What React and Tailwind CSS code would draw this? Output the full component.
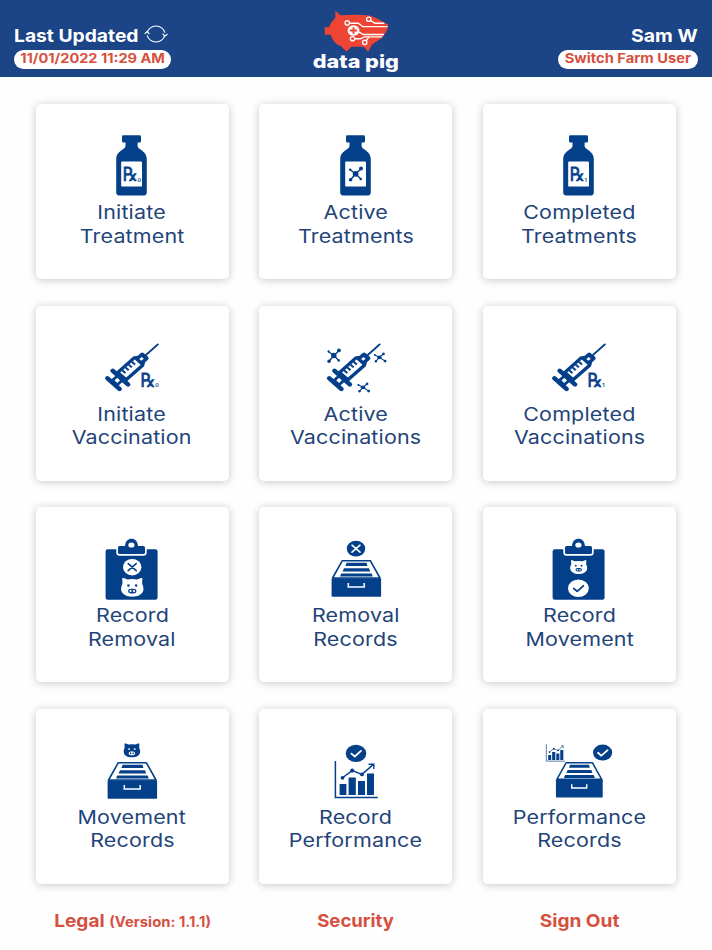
import React from 'react';

const BLUE = '#04408a';

// Small pig head, drawn in a 24x20 box
const PigHead = ({ x, y, width, height, color, detail }) => (
  <svg x={x} y={y} width={width} height={height} viewBox="0 0 24 20" preserveAspectRatio="none">
    <path
      fill={color}
      d="M1.5 .6C1.7 0 2.4 0 3 .2L7 1.8Q12 .8 17 1.8L21 .2C21.6 0 22.3 0 22.5 .6L22.3 6.5Q24 9 23.8 12C23.3 17 18 20 12 20S.7 17 .2 12Q0 9 1.7 6.5Z"
    />
    <circle cx="8" cy="8.2" r="1.3" fill={detail} />
    <circle cx="16" cy="8.2" r="1.3" fill={detail} />
    <rect x="7.6" y="11.4" width="8.8" height="5.2" rx="2.6" fill={detail} />
    <ellipse cx="10.2" cy="14" rx="1" ry="1.3" fill={color} />
    <ellipse cx="13.8" cy="14" rx="1" ry="1.3" fill={color} />
  </svg>
);

const CrossMark = ({ cx, cy, rx, ry, color, detail }) => (
  <g>
    <ellipse cx={cx} cy={cy} rx={rx} ry={ry} fill={color} />
    <path
      d={`M${cx - 4} ${cy - 3.5}l8 7m0 -7l-8 7`}
      stroke={detail}
      strokeWidth="1.6"
      strokeLinecap="round"
    />
  </g>
);

const CheckMark = ({ cx, cy, rx, ry, color, detail }) => (
  <g>
    <ellipse cx={cx} cy={cy} rx={rx} ry={ry} fill={color} />
    <path
      d={`M${cx - 4.6} ${cy + 0.2}l3.4 2.9l6.2 -5.6`}
      fill="none"
      stroke={detail}
      strokeWidth="1.8"
      strokeLinecap="round"
      strokeLinejoin="round"
    />
  </g>
);

const Rx = ({ x, y, digit }) => (
  <g transform={`translate(${x} ${y})`} fill={BLUE}>
    <text
      transform="translate(-1.2 14.6) scale(1 1.12)"
      fontSize="17.5"
      stroke={BLUE}
      strokeWidth=".6"
      textLength="15"
      lengthAdjust="spacingAndGlyphs"
      className="font-['DejaVu_Sans',sans-serif]"
    >
      ℞
    </text>
    <text x="13.9" y="14.8" fontSize="5.4" fontWeight="600">{digit}</text>
  </g>
);

const Molecule = ({ x, y, scale = 1 }) => (
  <g transform={`translate(${x} ${y}) scale(${scale})`} fill={BLUE}>
    <path d="M-5.5 -4L0 0L5.5 -5M-5 6L0 0L5 5" fill="none" stroke={BLUE} strokeWidth="1.4" />
    <circle r="2.9" />
    <circle cx="-5.5" cy="-4.2" r="1.2" />
    <circle cx="5.4" cy="-5.4" r="2" />
    <circle cx="-5" cy="6" r="1.8" />
    <circle cx="5.2" cy="5.2" r="1.3" />
  </g>
);

// Flatter variant floating beside the syringe
const SideMolecule = ({ x, y }) => (
  <g transform={`translate(${x} ${y})`} fill={BLUE}>
    <path d="M-4.4 -2.4L0 0L4 -3.4M-3.4 3.8L0 0L5.6 3.6" fill="none" stroke={BLUE} strokeWidth="1.1" />
    <ellipse rx="2.3" ry="1.8" />
    <circle cx="-4.6" cy="-2.4" r="1" />
    <circle cx="4.1" cy="-3.5" r="1.3" />
    <circle cx="-3.5" cy="3.9" r="1.2" />
    <circle cx="5.7" cy="3.7" r="1.4" />
  </g>
);

const Bottle = ({ children }) => (
  <g>
    <path
      fill={BLUE}
      d="M31.3 1.2H47.7Q49 1.2 49 2.5V7.2Q49 8.6 47.7 8.6H45.6V12C45.6 15.5 54.8 17 54.8 25V58.6Q54.8 61.4 52 61.4H27Q24.2 61.4 24.2 58.6V25C24.2 17 33.5 15.5 33.5 12V8.6H31.3Q30 8.6 30 7.2V2.5Q30 1.2 31.3 1.2Z"
    />
    <rect x="29.2" y="27.4" width="20.8" height="25.2" rx="1.2" fill="white" />
    {children}
  </g>
);

// Drawn along the x axis, then tilted up to the right
const Syringe = ({ x }) => (
  <g transform={`translate(${x} 47.7) scale(1.13 1) rotate(-45)`}>
    <path d="M38 0H55.5" stroke={BLUE} strokeWidth="1.8" strokeLinecap="round" />
    <path d="M0 -7.6V7.6" stroke={BLUE} strokeWidth="4.2" strokeLinecap="round" />
    <rect x="0" y="-4.4" width="8" height="8.8" fill={BLUE} />
    <path d="M8.6 -9.6V9.6" stroke={BLUE} strokeWidth="4.2" strokeLinecap="round" />
    <rect x="2.9" y="-1.8" width="3.6" height="3.6" rx=".6" fill="white" />
    <path d="M8 -6.8H31.5L35 -4.6H38.5Q40.6 -4.6 40.6 -2.6V2.6Q40.6 4.6 38.5 4.6H35L31.5 6.8H8Z" fill={BLUE} />
    <path d="M12.2 -3.8H30.4V3.6H12.2Z" fill="white" />
    <path d="M15 -4V0M19 -4V0M23 -4V0M27 -4V0" stroke={BLUE} strokeWidth="1.9" />
    <rect x="33.6" y="-1.3" width="3" height="2.6" fill="white" />
  </g>
);

const Clipboard = ({ children }) => (
  <g>
    <rect x="13.6" y="12.2" width="52" height="50.6" rx="2.2" fill={BLUE} />
    <path
      d="M27.5 9H33C33.5 4 36 1.8 39.5 1.8S45.5 4 46 9H51.5Q53 9 53 10.5V15.5Q53 17 51.5 17H27.5Q26 17 26 15.5V10.5Q26 9 27.5 9Z"
      fill={BLUE}
      stroke="white"
      strokeWidth="3.4"
      paintOrder="stroke"
    />
    <ellipse cx="39.4" cy="8" rx="3.1" ry="2.6" fill="white" />
    {children}
  </g>
);

const Drawer = ({ transform }) => (
  <g transform={transform}>
    <path d="M26.3 23.7H54.3L64 41H16.6Z" fill="white" stroke={BLUE} strokeWidth="1.6" strokeLinejoin="round" />
    <path
      fill={BLUE}
      d="M30.6 25.8H50.6L51.4 29H29.4ZM28 31.2H53L54.2 34.4H26.6ZM25.3 36.4H55.6L56.8 39.6H24Z"
    />
    <rect x="15.6" y="41.2" width="49.5" height="18.6" rx=".8" fill={BLUE} />
    <path d="M32.3 46V50H48.2V46" fill="none" stroke="white" strokeWidth="1.5" />
  </g>
);

const Chart = ({ transform }) => (
  <g transform={transform}>
    <path d="M19.4 22V58.6H61.8" fill="none" stroke={BLUE} strokeWidth="1.5" />
    <path d="M23.6 45H30.4V56H23.6ZM32.6 38.6H39.8V56H32.6ZM42 42H49V56H42ZM51 34.4H58V56H51Z" fill={BLUE} />
    <path d="M26.5 38.8L36.2 31.6L46 35.4L57.4 25.4M52.6 25.2H57.8V30" fill="none" stroke={BLUE} strokeWidth="1.4" />
    <circle cx="26.5" cy="38.8" r="1.9" fill={BLUE} />
    <circle cx="36.2" cy="31.6" r="2.1" fill={BLUE} />
    <circle cx="46" cy="35.4" r="1.9" fill={BLUE} />
  </g>
);

const tiles = [
  { lines: ['Initiate', 'Treatment'], icon: <Bottle><Rx x={31.6} y={32.8} digit="0" /></Bottle> },
  { lines: ['Active', 'Treatments'], icon: <Bottle><Molecule x={39.6} y={39.8} /></Bottle> },
  { lines: ['Completed', 'Treatments'], icon: <Bottle><Rx x={31.6} y={32.8} digit="1" /></Bottle> },
  { lines: ['Initiate', 'Vaccination'], icon: <><Syringe x={21.5} /><Rx x={49.4} y={36.6} digit="0" /></> },
  {
    lines: ['Active', 'Vaccinations'],
    icon: (
      <>
        <Syringe x={19.3} />
        <Molecule x={17.8} y={19.5} scale={0.95} />
        <SideMolecule x={63.4} y={21.4} />
        <SideMolecule x={47} y={51.4} />
      </>
    ),
  },
  { lines: ['Completed', 'Vaccinations'], icon: <><Syringe x={21.5} /><Rx x={49.4} y={36.6} digit="1" /></> },
  {
    lines: ['Record', 'Removal'],
    icon: (
      <Clipboard>
        <CrossMark cx={40.2} cy={30.2} rx={9.2} ry={8.3} color="white" detail={BLUE} />
        <PigHead x={28.8} y={40.8} width={23} height={19} color="white" detail={BLUE} />
      </Clipboard>
    ),
  },
  {
    lines: ['Removal', 'Records'],
    icon: <><CrossMark cx={40} cy={11.7} rx={9.2} ry={7.9} color={BLUE} detail="white" /><Drawer /></>,
  },
  {
    lines: ['Record', 'Movement'],
    icon: (
      <Clipboard>
        <PigHead x={31} y={23} width={17.4} height={14} color="white" detail={BLUE} />
        <CheckMark cx={39.4} cy={51.3} rx={10.4} ry={8.8} color="white" detail={BLUE} />
      </Clipboard>
    ),
  },
  {
    lines: ['Movement', 'Records'],
    icon: <><PigHead x={31.4} y={4.2} width={17} height={14.4} color={BLUE} detail="white" /><Drawer /></>,
  },
  {
    lines: ['Record', 'Performance'],
    icon: <><CheckMark cx={40} cy={14.4} rx={10.3} ry={8.6} color={BLUE} detail="white" /><Chart /></>,
  },
  {
    lines: ['Performance', 'Records'],
    icon: (
      <>
        <Chart transform="translate(-1.2 -4.8) scale(.44 .46)" />
        <CheckMark cx={63.6} cy={13.6} rx={9.6} ry={8} color={BLUE} detail="white" />
        <Drawer transform="translate(2.2 1) scale(.945 .96)" />
      </>
    ),
  },
];

const Logo = () => (
  <div className="flex flex-col items-center pt-[10px]">
    <svg className="h-[43px] w-[68px]" viewBox="100 30 205 130" fill="none">
      <path
        fill="#ee4433"
        d="M140 32L156 46Q200 42 236 46C262 49 277 64 300 74C300 88 289 107 278 116L251 134L239 156L226 141H188L174 156L157 139C139 134 131 119 126 105H108V82H121C125 68 137 60 140 52Z"
      />
      <g stroke="white" strokeWidth="4">
        <path d="M183 70H209L223 80H298M247 62L260 70H288M212 97L224 104H287M199 117H216L228 111H282M234 122L242 111" />
        <circle cx="176" cy="69" r="6.5" />
        <circle cx="241" cy="58" r="6.5" />
        <circle cx="192" cy="117" r="6.5" />
        <circle cx="229" cy="128" r="6.5" />
      </g>
      <ellipse cx="195" cy="92" rx="18" ry="16" fill="white" />
      <path d="M195 82V102M184 92H206" stroke="#ee4433" strokeWidth="6" />
    </svg>
    <span className="scale-x-[1.17] text-[18.5px] leading-[16px] font-extrabold">data pig</span>
  </div>
);

const RefreshIcon = () => (
  <svg className="h-[20px] w-[24px] -translate-y-px" viewBox="0 0 24 20" fill="none" stroke="white" strokeWidth="1.1">
    <path d="M3.2 8.6A9 8.3 0 0 1 20.8 8.6M20.8 11.4A9 8.3 0 0 1 3.2 11.4M.6 9.8L3.1 7.6L5.4 10.2M18.6 9.6L20.9 12.2L23.4 10" />
  </svg>
);

const Header = () => (
  <header className="grid h-[77px] grid-cols-3 bg-[#1b4587] pr-[14px] pl-[14px] text-white">
    <div className="flex flex-col items-start pt-[25px]">
      <div className="flex h-[25px] w-[154px] items-start justify-between">
        <span className="origin-left scale-x-[1.07] text-[18px] leading-[21px] font-bold">Last Updated</span>
        <RefreshIcon />
      </div>
      <span className="flex h-[19px] w-[157px] items-center justify-center rounded-full bg-white pb-[2px]">
        <span className="scale-x-[1.12] text-[13px] leading-none font-bold whitespace-nowrap text-[#d6503f]">11/01/2022 11:29 AM</span>
      </span>
    </div>
    <Logo />
    <div className="flex flex-col items-end pt-[25px]">
      <span className="h-[25px] origin-right scale-x-[1.08] text-[18px] leading-[21px] font-bold">Sam W</span>
      <span className="flex h-[19px] w-[140px] items-center justify-center rounded-full bg-white pb-[2px]">
        <span className="scale-x-[1.13] text-[13px] leading-none font-bold whitespace-nowrap text-[#d6503f]">Switch Farm User</span>
      </span>
    </div>
  </header>
);

const Tile = ({ lines, icon }) => (
  <button className="flex h-[175px] flex-col items-center rounded-[5px] bg-white pt-[30px] shadow-[0_1px_8px_rgba(0,0,0,0.22)]">
    <svg className="mb-[1.3px] h-[66px] w-[80px] shrink-0" viewBox="0 0 80 66" fill="none">
      {icon}
    </svg>
    {lines.map((line) => (
      <span key={line} className="scale-x-[1.16] text-[18.5px] leading-[23.4px] tracking-[0.15px] text-[#1f4479]">
        {line}
      </span>
    ))}
  </button>
);

function App() {
  return (
    <div className="h-[950px] w-[712px] overflow-hidden bg-[#fefefe] font-['Inter',sans-serif]">
      <Header />

      <main className="grid grid-cols-3 gap-x-[30.5px] gap-y-[26.5px] pt-[27px] pr-[36px] pl-[35.5px]">
        {tiles.map((tile) => (
          <Tile key={tile.lines.join(' ')} {...tile} />
        ))}
      </main>

      <footer className="grid grid-cols-3 gap-x-[30.5px] pt-[26px] pr-[36px] pl-[35.5px] text-center text-[18px] leading-[22px] font-bold text-[#d6503f]">
        <span className="scale-x-[1.06] whitespace-nowrap">
          Legal <span className="text-[14px]">(Version: 1.1.1)</span>
        </span>
        <span className="scale-x-[1.03]">Security</span>
        <span className="scale-x-[1.06]">Sign Out</span>
      </footer>
    </div>
  );
}

export default App;
